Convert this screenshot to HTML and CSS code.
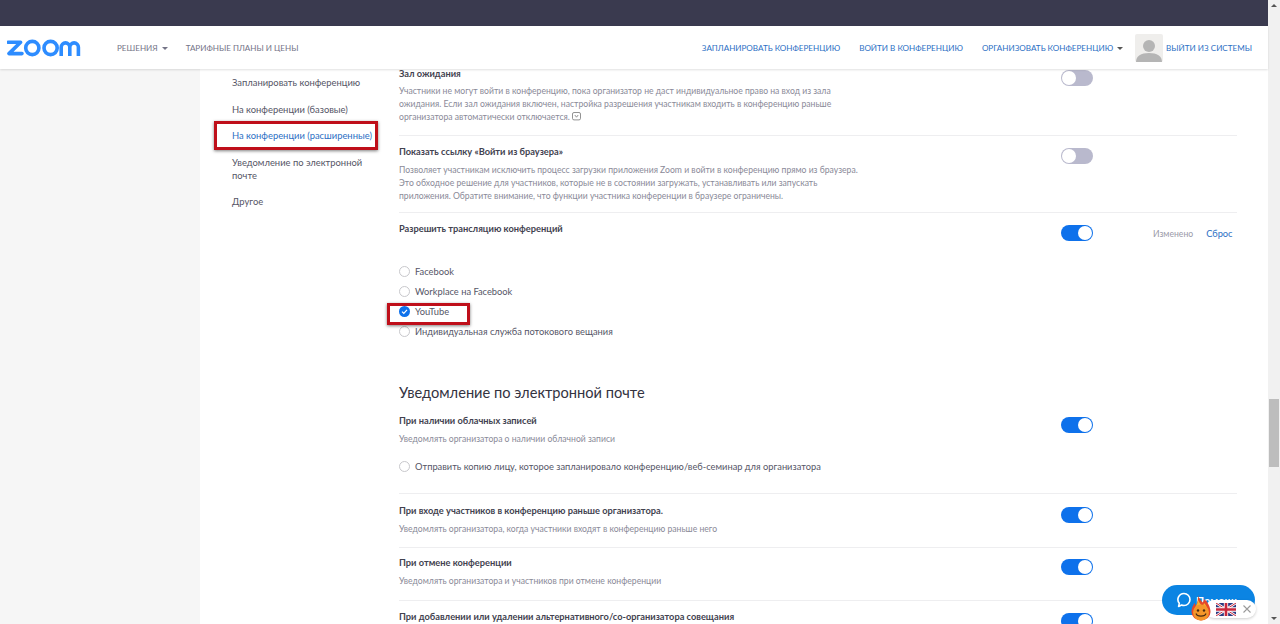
FILE: index.html
```html
<!DOCTYPE html>
<html lang="ru">
<head>
<meta charset="utf-8">
<title>Настройки</title>
<link rel="stylesheet" href="styles.css">
</head>
<body>
<div class="page">
  <div class="viewport">
    <div class="topbar"></div>
    <header class="header">
      <svg class="logo" width="74" height="18" viewBox="0 0 74 18" fill="none" stroke="#2D8CFF" stroke-width="3.6">
        <path d="M1.200 3.200H13.600L2 14.600H15" stroke-linejoin="round" stroke-linecap="round"/>
        <circle cx="25.300" cy="9" r="6.600"/>
        <circle cx="43.600" cy="9" r="6.600"/>
        <path d="M54.200 17V8.200a4.300 4.300 0 0 1 8.600 0V17M62.800 8.200a4.300 4.300 0 0 1 8.600 0V17"/>
      </svg>
      <nav class="nav-left">
        <a class="nav-item nav-solutions">РЕШЕНИЯ<span class="caret"></span></a>
        <a class="nav-item">ТАРИФНЫЕ ПЛАНЫ И ЦЕНЫ</a>
      </nav>
      <nav class="nav-right">
        <a class="nav-link">ЗАПЛАНИРОВАТЬ КОНФЕРЕНЦИЮ</a>
        <a class="nav-link">ВОЙТИ В КОНФЕРЕНЦИЮ</a>
        <a class="nav-link nav-host">ОРГАНИЗОВАТЬ КОНФЕРЕНЦИЮ<span class="caret"></span></a>
        <svg class="avatar" width="28" height="28" viewBox="0 0 28 28">
          <rect width="28" height="28" rx="2" fill="#EFEEEC"/>
          <circle cx="14" cy="12" r="6" fill="#B5B5B5"/>
          <path d="M1 28c0-6 5-9 13-9s13 3 13 9z" fill="#B5B5B5"/>
        </svg>
        <a class="nav-link nav-logout">ВЫЙТИ ИЗ СИСТЕМЫ</a>
      </nav>
    </header>
    <main class="main">
      <div class="gutter"></div>
      <aside class="sidebar">
        <a class="side-item">Запланировать конференцию</a>
        <a class="side-item">На конференции (базовые)</a>
        <a class="side-item side-active">На конференции (расширенные)</a>
        <a class="side-item">Уведомление по электронной почте</a>
        <a class="side-item">Другое</a>
      </aside>
      <div class="content">
        <section class="row row-first">
          <div class="row-text">
            <div class="title">Зал ожидания</div>
            <p class="desc">Участники не могут войти в конференцию, пока организатор не даст индивидуальное право на вход из зала ожидания. Если зал ожидания включен, настройка разрешения участникам входить в конференцию раньше организатора автоматически отключается. <svg class="info" width="9" height="9" viewBox="0 0 9 9" fill="none" stroke="#777" stroke-width=".8"><rect x=".5" y=".5" width="8" height="7.400" rx="1.500"/><path d="M2.800 3l1.700 2.200L6.200 3"/></svg></p>
          </div>
          <span class="toggle"></span>
        </section>
        <section class="row row-browser">
          <div class="row-text">
            <div class="title">Показать ссылку «Войти из браузера»</div>
            <p class="desc">Позволяет участникам исключить процесс загрузки приложения Zoom и войти в конференцию прямо из браузера. Это обходное решение для участников, которые не в состоянии загружать, устанавливать или запускать приложения. Обратите внимание, что функции участника конференции в браузере ограничены.</p>
          </div>
          <span class="toggle"></span>
        </section>
        <section class="row row-stream">
          <div class="row-text">
            <div class="title">Разрешить трансляцию конференций</div>
            <ul class="options">
              <li class="option"><span class="radio"></span>Facebook</li>
              <li class="option"><span class="radio"></span>Workplace на Facebook</li>
              <li class="option"><span class="radio radio-on"><svg width="11" height="11" viewBox="0 0 11 11" fill="none" stroke="#fff" stroke-width="1.200"><path d="M3 5.600l1.800 1.800L8 3.800"/></svg></span>YouTube</li>
              <li class="option"><span class="radio"></span>Индивидуальная служба потокового вещания</li>
            </ul>
          </div>
          <span class="toggle toggle-on"></span>
          <div class="status"><span class="changed">Изменено</span><a class="reset">Сброс</a></div>
        </section>
        <h2 class="section-title">Уведомление по электронной почте</h2>
        <section class="row row-cloud">
          <div class="row-text">
            <div class="title">При наличии облачных записей</div>
            <p class="desc">Уведомлять организатора о наличии облачной записи</p>
            <div class="option option-copy"><span class="radio"></span>Отправить копию лицу, которое запланировало конференцию/веб-семинар для организатора</div>
          </div>
          <span class="toggle toggle-on"></span>
        </section>
        <section class="row row-join">
          <div class="row-text">
            <div class="title">При входе участников в конференцию раньше организатора.</div>
            <p class="desc">Уведомлять организатора, когда участники входят в конференцию раньше него</p>
          </div>
          <span class="toggle toggle-on"></span>
        </section>
        <section class="row row-cancel">
          <div class="row-text">
            <div class="title">При отмене конференции</div>
            <p class="desc">Уведомлять организатора и участников при отмене конференции</p>
          </div>
          <span class="toggle toggle-on"></span>
        </section>
        <section class="row row-last">
          <div class="row-text">
            <div class="title">При добавлении или удалении альтернативного/со-организатора совещания</div>
          </div>
          <span class="toggle toggle-on"></span>
        </section>
      </div>
    </main>
  </div>
  <div class="scrollbar">
    <span class="arrow arrow-up"></span>
    <span class="thumb"></span>
    <span class="arrow arrow-down"></span>
  </div>
</div>

<div class="mark mark-side"></div>
<div class="mark mark-youtube"></div>

<div class="chat">
  <svg width="16" height="16" viewBox="0 0 16 16" fill="none" stroke="#fff" stroke-width="1.600"><path d="M8 1.500a6 6 0 0 1 0 12 6 6 0 0 1-2.400-.5L2.600 14.500l.7-3.200A6 6 0 0 1 8 1.500z" stroke-linejoin="round"/></svg>
  <span class="chat-label">Помощь</span>
</div>
<div class="hola">
  <svg class="flag" width="20" height="13" viewBox="0 0 60 39">
    <rect width="60" height="39" fill="#2B3A80"/>
    <path d="M0 0L60 39M60 0L0 39" stroke="#fff" stroke-width="8"/>
    <path d="M0 0L60 39M60 0L0 39" stroke="#C8283C" stroke-width="3"/>
    <path d="M30 0V39M0 19.500H60" stroke="#fff" stroke-width="13"/>
    <path d="M30 0V39M0 19.500H60" stroke="#C8283C" stroke-width="8"/>
  </svg>
  <svg class="close" width="8" height="8" viewBox="0 0 8 8" stroke="#9a9a9a" stroke-width="1.100"><path d="M.5.500l7 7M7.500.500l-7 7"/></svg>
</div>
<svg class="flame" width="22" height="27" viewBox="0 0 22 27">
  <path d="M8 0c0 4 3 6 4.500 8.500 1-.8 1.500-2 1.500-3.500 3 2 6.500 7.500 6.500 13a9.500 8.500 0 0 1-19 0c0-4 1.500-6.500 3-9 .6 1 1 2 1.200 3C7.500 9 8.500 4.500 8 0z" fill="#E5482A"/>
  <path d="M8.500 6c.5 3 2.500 4 3.500 6 1-.5 1.800-1.500 2-3 2 2 3 4 3.500 7h-13c.5-3 3-6 4-10z" fill="#F7B52C"/>
  <circle cx="11" cy="18.500" r="8" fill="#F4962A"/>
  <circle cx="8" cy="16.500" r="1.200" fill="#4a2a10"/>
  <circle cx="14" cy="16.500" r="1.200" fill="#4a2a10"/>
  <path d="M6 19.500c1 3.500 9 3.500 10 0" fill="none" stroke="#4a2a10" stroke-width="1.200"/>
</svg>
</body>
</html>
```
FILE: styles.css
```css
* { box-sizing: border-box; }
html, body { margin: 0; height: 624px; overflow: hidden; }
body { font-family: Lato, "Noto Sans", "Open Sans", sans-serif; background: #fff; color: #2d2d3f; }
a { text-decoration: none; }
ul, p, h2 { margin: 0; padding: 0; }

.page { display: flex; height: 624px; }
.viewport { flex: 1; min-width: 0; display: flex; flex-direction: column; }

.topbar { height: 26px; background: #3a3a4f; flex: none; }

.header {
  height: 43px; flex: none; display: flex; align-items: center;
  background: #fff; position: relative; z-index: 2;
  box-shadow: 0 1px 2px rgba(0, 0, 0, .12);
  padding-left: 7px; font-size: 8.100px;
}
.logo { flex: none; margin-top: 1px; }
.nav-left { display: flex; margin-left: 36px; color: #747487; }
.nav-item { display: flex; align-items: center; }
.nav-solutions { margin-right: 18px; }
.caret {
  width: 0; height: 0; margin-left: 4px; margin-top: 1px;
  border-left: 3px solid transparent; border-right: 3px solid transparent; border-top: 3px solid currentColor;
}
.nav-right { display: flex; align-items: center; margin-left: auto; padding-right: 16px; color: #2c6fc4; }
.nav-link { display: flex; align-items: center; margin-left: 19px; }
.nav-host .caret { color: #555; }
.avatar { margin-left: 12px; }
.nav-right .nav-logout { margin-left: 3px; }

.main { flex: 1; min-height: 0; display: flex; overflow: hidden; }
.gutter { width: 200px; flex: none; background: #f6f6f6; }
.sidebar { width: 199px; flex: none; padding-left: 32px; padding-right: 20px; font-size: 9.400px; line-height: 13px; color: #555566; }
.side-item { display: block; padding: 7px 0 6.600px; }
.side-active { color: #2c6fc4; }

.content { width: 838px; flex: none; }

.row { display: flex; align-items: flex-start; border-bottom: 1px solid #eeeef0; }
.row-text { width: 662px; flex: none; }
.title { font-size: 9.260px; line-height: 16px; font-weight: 700; color: #42424f; }
.desc { font-size: 8.650px; line-height: 13px; color: #8a8a98; width: 465px; margin-top: 3px; }
.info { vertical-align: -1px; }

.toggle {
  width: 32px; height: 16px; flex: none; margin-top: 4px; border-radius: 8px;
  background: #b9b9cd; position: relative;
}
.toggle::after {
  content: ""; position: absolute; top: 1px; left: 1px; width: 14px; height: 14px;
  border-radius: 50%; background: #fff;
}
.toggle-on { background: #0e71eb; }
.toggle-on::after { left: 17px; }

.row-first { padding-bottom: 12px; }
.row-first .title { line-height: 10px; margin-bottom: 5px; }
.row-first .toggle { margin-top: 1px; }
.row-browser { padding-top: 8px; padding-bottom: 10px; }
.row-stream { padding-top: 8px; border-bottom: 0; }
.row-cloud { padding-bottom: 17px; }
.row-join { padding-top: 9px; padding-bottom: 12px; }
.row-cancel { padding-top: 7px; padding-bottom: 13px; }
.row-last { padding-top: 9px; border-bottom: 0; }
.row-last .title { line-height: 14px; }
.row-last .toggle { margin-top: 3px; }

.status { margin-left: 60px; display: flex; align-items: center; height: 16px; margin-top: 4px; }
.changed { color: #9a9aa8; font-size: 8.650px; }
.reset { color: #2c6fc4; margin-left: 13px; font-size: 9.300px; }

.options { list-style: none; margin-top: 24px; }
.option { display: flex; align-items: center; height: 20px; font-size: 9.300px; color: #555566; }
.option-copy { margin-top: 11px; }
.radio {
  width: 11px; height: 11px; flex: none; margin-right: 5px; border-radius: 50%;
  border: 1px solid #c8c8cc; background: #fff;
}
.radio-on { background: #0e71eb; border: 0; }
.radio-on svg { display: block; }

.section-title { font-size: 14.640px; line-height: 22px; font-weight: 400; color: #33333f; margin-top: 41px; margin-bottom: 9px; }

.scrollbar { width: 12px; flex: none; background: #f1f1f1; display: flex; flex-direction: column; align-items: center; position: relative; }
.thumb { position: absolute; top: 399px; left: 1px; width: 10px; height: 68px; background: #bdbdbd; }
.arrow { width: 0; height: 0; border-left: 3px solid transparent; border-right: 3px solid transparent; position: absolute; }
.arrow-up { top: 4px; border-bottom: 3px solid #555; }
.arrow-down { bottom: 4px; border-top: 3px solid #555; }

.mark { position: absolute; border: 3px solid #bf0f1a; box-shadow: 0 1px 3px rgba(0, 0, 0, .5); }
.mark-side { left: 214px; top: 121px; width: 164px; height: 29px; }
.mark-youtube { left: 387px; top: 303px; width: 83px; height: 22px; }

.chat {
  position: absolute; left: 1162px; top: 585px; width: 93px; height: 30px;
  border-radius: 15px; background: #0b84e3; display: flex; align-items: center;
  padding-left: 14px; color: #fff; font-size: 11px;
}
.chat-label { margin-left: 4px; font-weight: 700; }
.hola {
  position: absolute; left: 1205px; top: 600px; width: 51px; height: 18px;
  border-radius: 9px; background: #fff; box-shadow: 0 1px 3px rgba(0, 0, 0, .2);
  display: flex; align-items: center; padding-left: 11px;
}
.close { margin-left: 7px; }
.flame { position: absolute; left: 1190px; top: 594px; }
```
